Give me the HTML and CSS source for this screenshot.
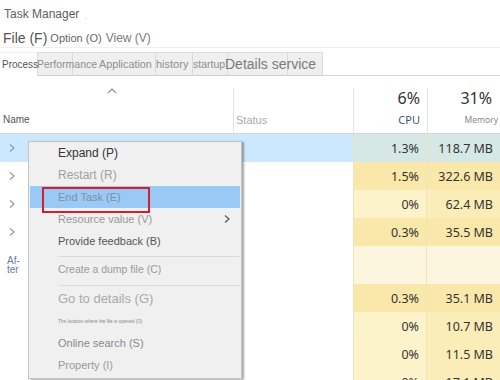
FILE: index.html
```html
<!DOCTYPE html>
<html>
<head>
<meta charset="utf-8">
<link rel="stylesheet" href="styles.css">
</head>
<body>
<div class="title">Task Manager<span class="dot">.</span></div>
<div class="menubar">
  <span class="m-file">File (F)</span>
  <span class="m-opt">Option (O)</span>
  <span class="m-view">View (V)</span>
</div>
<div class="tabs">
  <div class="tab active t1"><span class="tl tl-proc">Process</span></div>
  <div class="tab t2"><span class="tl tl-perf">Performance</span></div>
  <div class="tab t3"><span class="tl tl-app">Application</span></div>
  <div class="tab t4"><span class="tl tl-hist">history</span></div>
  <div class="tab t5"><span class="tl tl-start">startup</span></div>
  <div class="tab t6"><span class="tl tl-det">Details service</span></div>
  <div class="tab t7"></div>
  <div class="tabs-fill"></div>
</div>
<div class="table">
  <div class="thead">
    <div class="th th-name">
      <svg class="caret" width="10" height="6" viewBox="0 0 10 6"><polyline points="0.8,5.2 5,1 9.2,5.2" fill="none" stroke="#8a8a8a" stroke-width="1.1"/></svg>
      <span class="lbl-name">Name</span>
    </div>
    <div class="th th-status"><span class="lbl-status">Status</span></div>
    <div class="th th-cpu"><span class="pct">6%</span><span class="lbl-cpu">CPU</span></div>
    <div class="th th-mem"><span class="pct">31%</span><span class="lbl-mem">Memory</span></div>
  </div>

  <div class="row sel">
    <div class="c-name"><svg class="chev" width="6" height="10" viewBox="0 0 6 10"><polyline points="1,1.5 5,5 1,8.5" fill="none" stroke="#8796a8" stroke-width="1.1"/></svg></div>
    <div class="c-status"></div>
    <div class="c-cpu">1.3%</div>
    <div class="c-mem">118.7 MB</div>
  </div>
  <div class="row">
    <div class="c-name"><svg class="chev" width="6" height="10" viewBox="0 0 6 10"><polyline points="1,1.5 5,5 1,8.5" fill="none" stroke="#8796a8" stroke-width="1.1"/></svg></div>
    <div class="c-status"></div>
    <div class="c-cpu h2">1.5%</div>
    <div class="c-mem h2">322.6 MB</div>
  </div>
  <div class="row">
    <div class="c-name"><svg class="chev" width="6" height="10" viewBox="0 0 6 10"><polyline points="1,1.5 5,5 1,8.5" fill="none" stroke="#8796a8" stroke-width="1.1"/></svg></div>
    <div class="c-status"></div>
    <div class="c-cpu h1">0%</div>
    <div class="c-mem m1">62.4 MB</div>
  </div>
  <div class="row">
    <div class="c-name"><svg class="chev" width="6" height="10" viewBox="0 0 6 10"><polyline points="1,1.5 5,5 1,8.5" fill="none" stroke="#8796a8" stroke-width="1.1"/></svg></div>
    <div class="c-status"></div>
    <div class="c-cpu h2">0.3%</div>
    <div class="c-mem h2">35.5 MB</div>
  </div>
  <div class="row group">
    <div class="c-name"><span class="after">Af-<br>ter</span></div>
    <div class="c-status"></div>
    <div class="c-cpu g"></div>
    <div class="c-mem g"></div>
  </div>
  <div class="row">
    <div class="c-name"></div>
    <div class="c-status"></div>
    <div class="c-cpu h2">0.3%</div>
    <div class="c-mem h2">35.1 MB</div>
  </div>
  <div class="row">
    <div class="c-name"></div>
    <div class="c-status"></div>
    <div class="c-cpu h1">0%</div>
    <div class="c-mem m1">10.7 MB</div>
  </div>
  <div class="row">
    <div class="c-name"></div>
    <div class="c-status"></div>
    <div class="c-cpu h1">0%</div>
    <div class="c-mem m1">11.5 MB</div>
  </div>
  <div class="row">
    <div class="c-name"></div>
    <div class="c-status"></div>
    <div class="c-cpu h1">0%</div>
    <div class="c-mem m1">17.1 MB</div>
  </div>
</div>

<div class="ctx">
  <div class="mi mi-expand">Expand (P)</div>
  <div class="mi mi-restart">Restart (R)</div>
  <div class="mi hl mi-end">End Task (E)<span class="redbox"></span></div>
  <div class="mi mi-res">Resource value (V)<svg class="sub" width="6" height="10" viewBox="0 0 6 10"><polyline points="1,1.5 5,5 1,8.5" fill="none" stroke="#555" stroke-width="1.2"/></svg></div>
  <div class="mi mi-feed">Provide feedback (B)</div>
  <div class="sep sep1"></div>
  <div class="mi mi-dump">Create a dump file (C)</div>
  <div class="sep sep2"></div>
  <div class="mi mi-go">Go to details (G)</div>
  <div class="mi mi-loc">The location where the file is opened (O)</div>
  <div class="mi mi-online">Online search (S)</div>
  <div class="mi mi-prop">Property (I)</div>
</div>
</body>
</html>
```

FILE: styles.css
```css
html, body {
  margin: 0;
  padding: 0;
}
body {
  width: 500px;
  height: 380px;
  overflow: hidden;
  background: #fff;
  font-family: "Liberation Sans", Arial, sans-serif;
  position: relative;
}

.title {
  height: 28px;
  display: flex;
  align-items: center;
  padding-left: 4px;
  font-size: 12px;
  color: #5e5e5e;
}
.dot {
  font-size: 8px;
  color: #aaa;
  margin-left: 5px;
  margin-top: 4px;
}

.menubar {
  height: 20px;
  display: flex;
  align-items: center;
  padding-left: 3px;
  border-bottom: 1px solid #efefef;
  box-sizing: border-box;
}
.m-file { font-size: 14px; color: #555; }
.m-opt { font-size: 11px; color: #666; margin-left: 3px; }
.m-view { font-size: 12px; color: #7a7a7a; margin-left: 4px; }

.tabs {
  margin-top: 4px;
  height: 24px;
  display: flex;
}
.tab {
  box-sizing: border-box;
  height: 24px;
  display: flex;
  align-items: center;
  background: #efefef;
  border-top: 1px solid #dcdcdc;
  border-right: 1px solid #d9d9d9;
  border-bottom: 1px solid #cfcfcf;
  white-space: nowrap;
}
.tab.active {
  background: #fff;
  border-top-color: #f4f4f4;
  border-bottom-color: #fff;
}
.t1 { width: 38px; }
.t2 { width: 35px; }
.t3 { width: 83px; }
.t4 { width: 37px; }
.t5 { width: 35px; }
.t6 { width: 60px; }
.t7 { width: 35px; }
.tabs-fill {
  flex: 1;
  height: 24px;
  box-sizing: border-box;
  border-bottom: 1px solid #d6d6d6;
}
.tl {
  position: relative;
  z-index: 1;
  font-size: 10.5px;
  color: #8e8e8e;
}
.tl-proc { font-size: 10px; color: #555; margin-left: 2px; }
.tl-perf { margin-left: -1px; }
.tl-app { margin-left: 26px; font-size: 10.8px; }
.tl-hist { margin-left: 0px; font-size: 11px; }
.tl-start { margin-left: 0px; }
.tl-det { margin-left: -3px; font-size: 14px; color: #7a7a7a; }

.thead {
  display: grid;
  grid-template-columns: 233px 120px 74px 73px;
  height: 58px;
  padding-top: 12px;
  box-sizing: border-box;
  border-bottom: 1px solid #d6d6d6;
}
.th {
  display: flex;
  flex-direction: column;
  border-left: 1px solid #e4e4e4;
}
.th-name {
  border-left: none;
  justify-content: space-between;
  padding-bottom: 7px;
}
.caret {
  margin-left: 107px;
}
.lbl-name {
  font-size: 10px;
  line-height: 12px;
  color: #555;
  padding-left: 3px;
}
.th-status {
  justify-content: flex-end;
  padding-bottom: 7px;
}
.lbl-status {
  font-size: 11px;
  line-height: 12px;
  color: #aaa;
  padding-left: 2px;
}
.th-cpu, .th-mem {
  align-items: flex-end;
}
.pct {
  font-family: "Noto Sans", "Liberation Sans", sans-serif;
  font-size: 16px;
  line-height: 20px;
  color: #333;
}
.th-cpu { padding-right: 7px; }
.th-mem { padding-right: 8px; }
.lbl-cpu {
  font-family: "Noto Sans", "Liberation Sans", sans-serif;
  font-size: 11px;
  line-height: 14px;
  color: #3f5877;
  margin-top: 5px;
}
.lbl-mem {
  font-family: "Noto Sans", "Liberation Sans", sans-serif;
  font-size: 8.5px;
  line-height: 14px;
  color: #888;
  margin-top: 5px;
  margin-right: -6px;
}

.row {
  display: grid;
  grid-template-columns: 233px 120px 74px 73px;
  height: 28px;
}
.row.group { height: 38px; }
.c-name {
  display: flex;
  align-items: center;
  padding-left: 9px;
}
.c-cpu, .c-mem {
  display: flex;
  align-items: center;
  justify-content: flex-end;
  font-family: "Noto Sans", "Liberation Sans", sans-serif;
  font-size: 12.5px;
  color: #333;
  white-space: nowrap;
}
.c-cpu {
  padding-right: 7px;
  border-left: 1px solid #eee2bb;
  border-right: 1px solid #f0e3b6;
}
.c-mem { padding-right: 7px; }

.row.sel .c-name, .row.sel .c-status { background: #cce8ff; }
.row.sel .c-cpu, .row.sel .c-mem { background: #d6e8e6; }
.h2 { background: #f9e8aa; }
.h1 { background: #fdf3cb; }
.m1 { background: #fbedb8; }
.g { background: #fdf6de; }

.after {
  font-size: 10px;
  line-height: 9.5px;
  color: #6a78ad;
  margin-left: -2px;
}

.ctx {
  position: absolute;
  left: 28px;
  top: 141px;
  width: 212px;
  height: 236px;
  background: #f0f0f0;
  border: 1px solid #c4c4c4;
  box-shadow: 2px 1px 2px rgba(0, 0, 0, 0.35);
}
.mi {
  height: 22px;
  display: flex;
  align-items: center;
  margin: 0 1px;
  padding-left: 28px;
  font-size: 11px;
  color: #9a9a9a;
  white-space: nowrap;
  position: relative;
}
.mi-expand { font-size: 12px; color: #333; }
.mi-restart { font-size: 12px; color: #a0a0a0; }
.mi.hl { background: #99c9f4; color: #7d8fa8; }
.redbox {
  position: absolute;
  left: 12px;
  top: 1px;
  width: 104px;
  height: 22px;
  border: 2px solid #d11f2e;
}
.sub { margin-left: auto; margin-right: 10px; }
.mi-feed { color: #555; }
.sep {
  height: 1px;
  background: #d8d8d8;
  margin-left: 30px;
  margin-right: 2px;
}
.sep1 { margin-top: 4px; margin-bottom: 3px; }
.sep2 { margin-top: 7px; margin-bottom: 4px; }
.mi-dump { height: 18px; font-size: 10.5px; color: #9a9a9a; }
.mi-go { height: 16px; font-size: 13px; color: #aaa; }
.mi-loc { height: 26px; font-size: 4.7px; color: #888; padding-top: 4px; box-sizing: border-box; }
.mi-online { font-size: 11px; color: #8a8a8a; }
.mi-prop { font-size: 11px; color: #9a9a9a; }
```
